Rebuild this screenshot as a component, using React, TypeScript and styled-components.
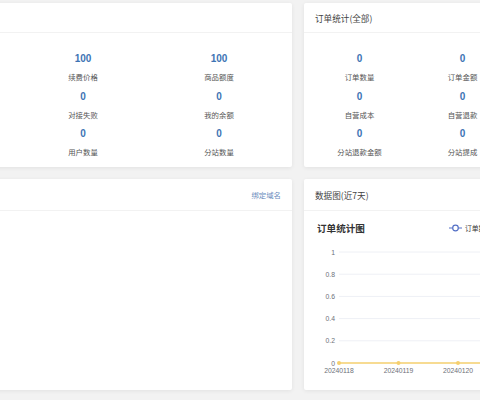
import React from 'react';
import styled, { createGlobalStyle } from 'styled-components';

const GlobalStyle = createGlobalStyle`
  html, body {
    margin: 0;
    padding: 0;
    background: #f2f2f2;
    overflow: hidden;
    font-family: "Noto Sans CJK SC", "Noto Sans", sans-serif;
  }
`;

const Viewport = styled.div`
  width: 480px;
  height: 400px;
  overflow: hidden;
`;

const Grid = styled.div`
  display: grid;
  grid-template-columns: 418px 420px;
  grid-template-rows: 164px 211px;
  gap: 12px;
  margin-left: -126px;
  padding-top: 3px;
`;

const Card = styled.div`
  background: #fff;
  border-radius: 2px;
  box-shadow: 0 1px 4px rgba(0, 0, 0, 0.07);
  display: flex;
  flex-direction: column;
  overflow: hidden;
`;

const CardHeader = styled.div<{ $h: number }>`
  height: ${p => p.$h - 1}px;
  flex-shrink: 0;
  border-bottom: 1px solid #f2f2f2;
  padding: 0 11px;
  display: flex;
  align-items: center;
  justify-content: space-between;
  font-size: 8.6px;
  color: #444;
`;

const HeaderLink = styled.a`
  font-size: 7.4px;
  color: #6a8cbd;
  text-decoration: none;
  cursor: pointer;
`;

const StatGrid = styled.div<{ $col: number; $pad: number }>`
  display: grid;
  grid-template-columns: repeat(3, ${p => p.$col}px);
  padding: 17px ${p => p.$pad}px 5px;
`;

const Stat = styled.div`
  display: flex;
  flex-direction: column;
  align-items: center;
`;

const StatValue = styled.div`
  font-size: 10px;
  font-weight: 700;
  line-height: 18px;
  color: #3d74b4;
  font-family: "Liberation Sans", "Noto Sans CJK SC", sans-serif;
`;

const StatLabel = styled.div`
  font-size: 7.4px;
  line-height: 19.5px;
  margin-top: -1px;
  margin-bottom: 1px;
  color: #555;
`;

const ChartBox = styled.div`
  flex: 1;
`;

type StatItem = { value: string; label: string };

const accountStats: StatItem[] = [
  { value: '0', label: '账户余额' },
  { value: '100', label: '续费价格' },
  { value: '100', label: '商品额度' },
  { value: '0', label: '对接成功' },
  { value: '0', label: '对接失败' },
  { value: '0', label: '我的余额' },
  { value: '0', label: '商品数量' },
  { value: '0', label: '用户数量' },
  { value: '0', label: '分站数量' },
];

const orderStats: StatItem[] = [
  { value: '0', label: '订单数量' },
  { value: '0', label: '订单金额' },
  { value: '0', label: '订单利润' },
  { value: '0', label: '自营成本' },
  { value: '0', label: '自营退款' },
  { value: '0', label: '自营利润' },
  { value: '0', label: '分站退款金额' },
  { value: '0', label: '分站提成' },
  { value: '0', label: '分站利润' },
];

const StatBlock = ({ items, col, pad }: { items: StatItem[]; col: number; pad: number }) => (
  <StatGrid $col={col} $pad={pad}>
    {items.map((s, i) => (
      <Stat key={i}>
        <StatValue>{s.value}</StatValue>
        <StatLabel>{s.label}</StatLabel>
      </Stat>
    ))}
  </StatGrid>
);

const days = ['20240118', '20240119', '20240120', '20240121', '20240122', '20240123', '20240124'];
const ticks = ['1', '0.8', '0.6', '0.4', '0.2', '0'];

const OrderChart = () => {
  const x0 = 35;
  const step = 59.5;
  const yTop = 41;
  const yGap = 22.2;
  const yZero = yTop + yGap * 5;
  const axisFont = { fontSize: 6.8, fill: '#6e7079', fontFamily: 'Liberation Sans, sans-serif' };
  return (
    <svg width="420" height="178" viewBox="0 0 420 178">
      <text x="13" y="21" fontSize="9.6" fontWeight="700" fill="#333" fontFamily="Noto Sans CJK SC, sans-serif">
        订单统计图
      </text>
      <line x1="145" y1="17" x2="158" y2="17" stroke="#5470c6" strokeWidth="1.2" />
      <circle cx="151.5" cy="17" r="2.8" fill="#fff" stroke="#5470c6" strokeWidth="1.2" />
      <text x="161" y="19.5" fontSize="6.8" fill="#333" fontFamily="Noto Sans CJK SC, sans-serif">
        订单数量
      </text>
      {ticks.map((t, i) => {
        const y = yTop + yGap * i;
        return (
          <g key={t}>
            {i < 5 && <line x1={x0} y1={y} x2="410" y2={y} stroke="#eef0f5" strokeWidth="1" />}
            <text x="31" y={y + 2.5} textAnchor="end" {...axisFont}>
              {t}
            </text>
          </g>
        );
      })}
      <line x1={x0} y1={yZero} x2="410" y2={yZero} stroke="#f5cf6e" strokeWidth="1.6" />
      {days.map((d, i) => {
        const x = x0 + step * i;
        return (
          <g key={d}>
            <circle cx={x} cy={yZero} r="2" fill="#f5cf6e" />
            <text x={x} y={yZero + 10} textAnchor="middle" {...axisFont}>
              {d}
            </text>
          </g>
        );
      })}
    </svg>
  );
};

export default function App() {
  return (
    <Viewport>
      <GlobalStyle />
      <Grid>
        <Card>
          <CardHeader $h={30}>
            <span>账户信息</span>
          </CardHeader>
          <StatBlock items={accountStats} col={136} pad={5} />
        </Card>
        <Card>
          <CardHeader $h={30}>
            <span>订单统计(全部)</span>
          </CardHeader>
          <StatBlock items={orderStats} col={103} pad={4} />
        </Card>
        <Card>
          <CardHeader $h={32}>
            <span>我的域名</span>
            <HeaderLink>绑定域名</HeaderLink>
          </CardHeader>
        </Card>
        <Card>
          <CardHeader $h={32}>
            <span>数据图(近7天)</span>
          </CardHeader>
          <ChartBox>
            <OrderChart />
          </ChartBox>
        </Card>
      </Grid>
    </Viewport>
  );
}
